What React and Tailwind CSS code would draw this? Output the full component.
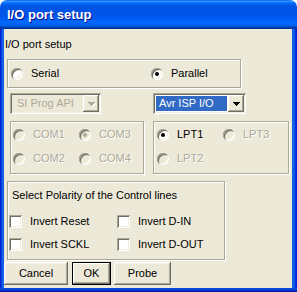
import React from "react";

const sunken =
  "shadow-[inset_1px_1px_0_#aca899,inset_-1px_-1px_0_#ffffff,inset_2px_2px_0_#716f64,inset_-2px_-2px_0_#f1efe2]";
const raised =
  "shadow-[inset_-1px_-1px_0_#716f64,inset_1px_1px_0_#ffffff,inset_-2px_-2px_0_#aca899,inset_2px_2px_0_#f1efe2]";
const etched =
  "border border-[#aca899] shadow-[inset_1px_1px_0_#ffffff,1px_1px_0_#ffffff]";
const disabledText = "text-[#aca899] [text-shadow:1px_1px_0_#ffffff]";

function Radio({ checked, disabled }) {
  return (
    <span
      className={`w-[12px] h-[12px] rounded-full shrink-0 flex items-center justify-center ${
        disabled ? "bg-[#ece9d8]" : "bg-white"
      } ${sunken}`}
    >
      {checked && (
        <span
          className={`w-[4px] h-[4px] rounded-full ${
            disabled ? "bg-[#aca899]" : "bg-black"
          }`}
        />
      )}
    </span>
  );
}

function RadioItem({ label, checked, disabled }) {
  return (
    <div className="flex items-center gap-[8px] h-[13px]">
      <Radio checked={checked} disabled={disabled} />
      <span className={disabled ? disabledText : "text-black"}>{label}</span>
    </div>
  );
}

function Check({ label }) {
  return (
    <div className="flex items-center gap-[8px] h-[13px]">
      <span className={`w-[13px] h-[13px] shrink-0 bg-white ${sunken}`} />
      <span>{label}</span>
    </div>
  );
}

function Arrow({ disabled }) {
  const c = disabled ? "#aca899" : "#000000";
  return (
    <svg width="8" height="5" viewBox="0 0 8 5" shapeRendering="crispEdges">
      {disabled && (
        <g fill="#ffffff">
          <rect x="1" y="1" width="7" height="1" />
          <rect x="2" y="2" width="5" height="1" />
          <rect x="3" y="3" width="3" height="1" />
          <rect x="4" y="4" width="1" height="1" />
        </g>
      )}
      <g fill={c}>
        <rect x="0" y="0" width="7" height="1" />
        <rect x="1" y="1" width="5" height="1" />
        <rect x="2" y="2" width="3" height="1" />
        <rect x="3" y="3" width="1" height="1" />
      </g>
    </svg>
  );
}

function Combo({ text, disabled, width }) {
  return (
    <div
      className={`h-[21px] p-[2px] flex ${sunken} ${
        disabled ? "bg-[#ece9d8]" : "bg-white"
      }`}
      style={{ width }}
    >
      <div className="flex-1 p-[1px] pr-[1px] flex">
        {disabled ? (
          <span className="pl-[4px] leading-[15px] text-[#aca899]">{text}</span>
        ) : (
          <span className="flex-1 bg-[#316ac5] text-white pl-[3px] leading-[15px]">
            {text}
          </span>
        )}
      </div>
      <div
        className={`w-[16px] h-[17px] bg-[#ece9d8] flex items-center justify-center pl-[1px] pt-[1px] ${raised}`}
      >
        <Arrow disabled={disabled} />
      </div>
    </div>
  );
}

function Button({ children, def, width }) {
  return (
    <div
      className={`h-[23px] bg-[#ece9d8] ${
        def ? "border border-black" : ""
      }`}
      style={{ width }}
    >
      <div className={`w-full h-full flex items-center justify-center ${raised}`}>
        {children}
      </div>
    </div>
  );
}

export default function App() {
  return (
    <div className="w-[297px] h-[292px] bg-white font-['Liberation_Sans',Arial,sans-serif]">
      <div className="w-[297px] h-[292px] flex flex-col">
        <div className="h-[29px] rounded-t-[7px] pl-[7px] pt-[1px] flex items-center bg-[linear-gradient(to_bottom,#0058ee_0%,#3593ff_4%,#288eff_6%,#127dff_8%,#036ffc_10%,#0262ee_14%,#0057e5_20%,#0054e3_24%,#0055eb_56%,#005bf5_66%,#026afe_76%,#0062ef_86%,#0052d6_92%,#0040ab_94%,#003092_100%)]">
          <span className="text-white font-bold text-[13px] leading-[16px] [text-shadow:1px_1px_0_#0f1089]">
            I/O port setup
          </span>
        </div>
        <div className="flex h-[259px]">
          <div className="w-[4px] bg-[linear-gradient(to_right,#0019cf,#0831d9_30%,#166aee_65%,#0855dd)]" />
          <div className="w-[288px] bg-[#ece9d8] flex flex-col text-[11px] leading-[13px] text-black">
            <div className="mt-[9px] ml-[1px] h-[13px]">I/O port setup</div>

            <div
              className={`mt-[8px] ml-[3px] w-[234px] h-[29px] flex items-center pl-[3px] ${etched}`}
            >
              <div className="w-[140px]">
                <RadioItem label="Serial" />
              </div>
              <RadioItem label="Parallel" checked />
            </div>

            <div className="mt-[5px] flex h-[21px]">
              <div className="ml-[6px]">
                <Combo text="SI Prog API" disabled width={91} />
              </div>
              <div className="ml-[52px]">
                <Combo text="Avr ISP I/O" width={93} />
              </div>
            </div>

            <div className="mt-[7px] flex h-[53px]">
              <div
                className={`ml-[6px] w-[134px] h-[53px] pl-[2px] pt-[6px] ${etched}`}
              >
                <div className="grid grid-cols-[66px_66px] gap-y-[11px]">
                  <RadioItem label="COM1" disabled />
                  <RadioItem label="COM3" disabled checked />
                  <RadioItem label="COM2" disabled />
                  <RadioItem label="COM4" disabled />
                </div>
              </div>
              <div
                className={`ml-[9px] w-[136px] h-[53px] pl-[3px] pt-[6px] ${etched}`}
              >
                <div className="grid grid-cols-[66px_66px] gap-y-[11px]">
                  <RadioItem label="LPT1" checked />
                  <RadioItem label="LPT3" disabled />
                  <RadioItem label="LPT2" disabled />
                </div>
              </div>
            </div>

            <div
              className={`mt-[7px] ml-[3px] w-[218px] h-[79px] flex flex-col ${etched}`}
            >
              <div className="mt-[7px] pl-[4px] h-[13px]">
                Select Polarity of the Control lines
              </div>
              <div className="mt-[13px] pl-[1px] grid grid-cols-[108px_auto] gap-y-[10px]">
                <Check label="Invert Reset" />
                <Check label="Invert D-IN" />
                <Check label="Invert SCKL" />
                <Check label="Invert D-OUT" />
              </div>
            </div>

            <div className="mt-[2px] flex">
              <Button width={64}>Cancel</Button>
              <div className="ml-[4px]">
                <Button width={39} def>
                  OK
                </Button>
              </div>
              <div className="ml-[3px]">
                <Button width={57}>Probe</Button>
              </div>
            </div>
          </div>
          <div className="w-[5px] bg-[linear-gradient(to_left,#0019cf,#0831d9_30%,#166aee_65%,#0855dd)]" />
        </div>
        <div className="h-[4px] bg-[linear-gradient(to_top,#00138c,#0831d9_40%,#0855dd)]" />
      </div>
    </div>
  );
}
